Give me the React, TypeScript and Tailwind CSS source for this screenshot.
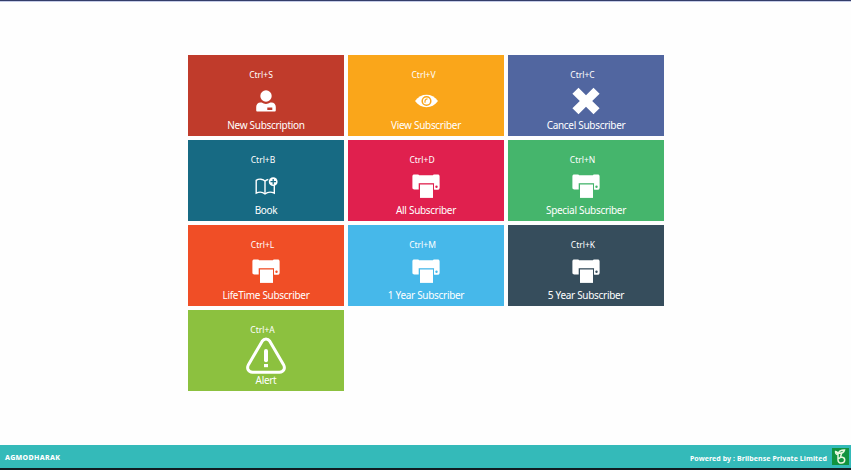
import React from 'react';

type IconProps = { bg: string };

function UserIcon() {
  return (
    <svg className="h-[22px] w-[20px]" viewBox="0 0 20 22" fill="currentColor">
      <circle cx="10" cy="6" r="5.7" />
      <path fillRule="evenodd" d="M4.500 12.600h1.200c2.500 1.900 6.100 1.900 8.600 0h1.200c2.500 0 4.300 2 4.300 4.500v3.200c0 .8-.5 1.200-1.200 1.200H1.400c-.7 0-1.200-.4-1.200-1.200v-3.200c0-2.500 1.800-4.500 4.300-4.500ZM11.300 17.500v2.500h5v-2.500Z" />
    </svg>
  );
}

function EyeIcon({ bg }: IconProps) {
  return (
    <svg className="h-[14px] w-[23px]" viewBox="0 0 23 14" fill="currentColor">
      <path d="M0 7C3.200 2.700 7 .8 11.500.8S19.800 2.700 23 7c-3.200 4.300-7 6.200-11.500 6.200S3.200 11.300 0 7Z" />
      <circle cx="11.500" cy="7" r="4.300" fill="none" stroke={bg} strokeWidth="1.500" />
      <path d="M12.500 4.800C10.300 5 9.500 6.800 10.200 8.800" fill="none" stroke={bg} strokeWidth="1.200" />
    </svg>
  );
}

function CrossIcon() {
  return (
    <svg className="h-[28px] w-[28px]" viewBox="0 0 28 28" fill="currentColor">
      <path d="M6.500.8 14 8.200 21.500.8 27.600 6.700 20.200 14 27.600 21.300 21.500 27.200 14 19.800 6.500 27.200.4 21.300 7.800 14 .4 6.700Z" />
    </svg>
  );
}

function BookIcon({ bg }: IconProps) {
  return (
    <svg className="h-[18px] w-[23px]" viewBox="0 0 23 18" fill="none" stroke="currentColor">
      <path d="M10 4.200C8.300 1.900 3.800 1.400 1.200 3.400v12.800c2.700-1.400 6.400-1.200 8.800.7 2.600-1.900 6.300-2.100 9.300-.7V8M10 4.200v11.600M10 4.200c.8-1 2-1.500 3.300-1.700" strokeWidth="1.400" />
      <circle cx="18.200" cy="4.700" r="4.400" fill="currentColor" stroke="none" />
      <path d="M15.500 4.700H21M18.200 2v5.400" stroke={bg} strokeWidth="1.300" />
    </svg>
  );
}

function PrinterIcon({ bg }: IconProps) {
  return (
    <svg className="mt-px h-[25px] w-[28px]" viewBox="0 0 28 25" fill="currentColor">
      <path d="M2.300.5h4l.9.8h13.600l.9-.8h4c1 0 1.900.7 1.900 1.700v11.600c0 1-.8 1.700-1.900 1.700H2.300c-1 0-1.900-.7-1.900-1.700V2.200C.4 1.200 1.200.5 2.300.5Z" />
      <path d="M6.700 9.200v7.300h15.600V9.200Z" fill={bg} />
      <path d="M22 9.200h5.100v6.300H22Z" />
      <circle cx="24.500" cy="12.700" r="1.200" fill={bg} />
      <path d="M8 10.500h13v13.400H8Z" />
    </svg>
  );
}

function AlertIcon() {
  return (
    <svg className="mt-px h-[38px] w-[42px]" viewBox="0 0 42 38" fill="none" stroke="currentColor" strokeLinejoin="round">
      <path d="M17.200 4.200c2-2.900 5.600-2.900 7.600 0l13.600 23.200c2.300 4.200.2 7.600-3.900 7.900h-27c-4.100-.3-6.200-3.700-3.900-7.900Z" strokeWidth="3" />
      <path d="M21 14v9.200" strokeWidth="4" strokeLinecap="round" />
      <path d="M19 27h4v3.200h-4Z" fill="currentColor" stroke="none" />
    </svg>
  );
}

type Tile = {
  shortcut: string;
  label: string;
  bg: string;
  shift: string;
  icon: React.ReactNode;
};

const tiles: Tile[] = [
  { shortcut: 'Ctrl+S', label: 'New Subscription', bg: 'bg-[#c03b2b]', shift: 'pr-[10px]', icon: <UserIcon /> },
  { shortcut: 'Ctrl+V', label: 'View Subscriber', bg: 'bg-[#faa61a]', shift: 'pr-[5px]', icon: <EyeIcon bg="#faa61a" /> },
  { shortcut: 'Ctrl+C', label: 'Cancel Subscriber', bg: 'bg-[#5166a0]', shift: 'pr-[7px]', icon: <CrossIcon /> },
  { shortcut: 'Ctrl+B', label: 'Book', bg: 'bg-[#176a83]', shift: 'pr-[6px]', icon: <BookIcon bg="#176a83" /> },
  { shortcut: 'Ctrl+D', label: 'All Subscriber', bg: 'bg-[#e0204e]', shift: 'pr-[8px]', icon: <PrinterIcon bg="#e0204e" /> },
  { shortcut: 'Ctrl+N', label: 'Special Subscriber', bg: 'bg-[#45b56c]', shift: 'pr-[7px]', icon: <PrinterIcon bg="#45b56c" /> },
  { shortcut: 'Ctrl+L', label: 'LifeTime Subscriber', bg: 'bg-[#f04e26]', shift: 'pr-[7px]', icon: <PrinterIcon bg="#f04e26" /> },
  { shortcut: 'Ctrl+M', label: '1 Year Subscriber', bg: 'bg-[#46b8ea]', shift: 'pr-[7px]', icon: <PrinterIcon bg="#46b8ea" /> },
  { shortcut: 'Ctrl+K', label: '5 Year Subscriber', bg: 'bg-[#364d5c]', shift: 'pr-[6px]', icon: <PrinterIcon bg="#364d5c" /> },
  { shortcut: 'Ctrl+A', label: 'Alert', bg: 'bg-[#8cc13f]', shift: 'pr-[7px]', icon: <AlertIcon /> },
];

export default function App() {
  return (
    <div className="flex h-[470px] w-[851px] flex-col overflow-hidden border-t border-[#343d69] bg-[#fefefe] font-['Noto_Sans','Open_Sans',sans-serif] text-white">
      <main className="flex-1 border-t border-[#c5cce8] pt-[53px] pl-[188px]">
        <div className="grid w-[476px] grid-cols-3 gap-x-1 gap-y-[3.900px]">
          {tiles.map((tile) => (
            <button key={tile.shortcut} className={`flex h-[81px] flex-col items-center pt-[13.300px] ${tile.bg}`}>
              <span className={`h-[13.700px] text-[8.500px] leading-[13px] whitespace-nowrap ${tile.shift}`}>{tile.shortcut}</span>
              <span className="flex h-[38px] items-center justify-center">{tile.icon}</span>
              <span className="-mt-[2px] h-[14px] text-[10px] leading-[14px] tracking-[-0.300px] whitespace-nowrap">{tile.label}</span>
            </button>
          ))}
        </div>
      </main>
      <footer className="flex h-[25px] items-center justify-between border-b-2 border-[#111c22] bg-[#34bab9] pr-[2px] pl-[5px] font-bold">
        <span className="pt-[3px] text-[7px] font-extrabold tracking-[0.330px]">AGMODHARAK</span>
        <span className="flex items-center gap-[5px]">
          <span className="pt-[5px] text-[7px] tracking-[0.080px]">Powered by : Brilbense Private Limited</span>
          <svg className="h-[17px] w-[17px]" viewBox="0 0 17 17" fill="none" stroke="#e9f7df" strokeWidth="1.500">
            <path d="M0 0h17v17H0Z" fill="#11933f" stroke="none" />
            <path d="M6 6v6c0 4.200 6.700 3.900 6.700 0 0-3.400-4.200-3.700-6-1.200M6 6.500C4 6.500 3.500 5 3.600 3.500 5 3.700 6 4.800 6 6.500ZM6.500 5.300c.5-2.800 2.500-3.300 6-3.300-.6 2.500-2.500 3.500-6 3.300ZM8.500 9l1-3.500" />
          </svg>
        </span>
      </footer>
    </div>
  );
}
